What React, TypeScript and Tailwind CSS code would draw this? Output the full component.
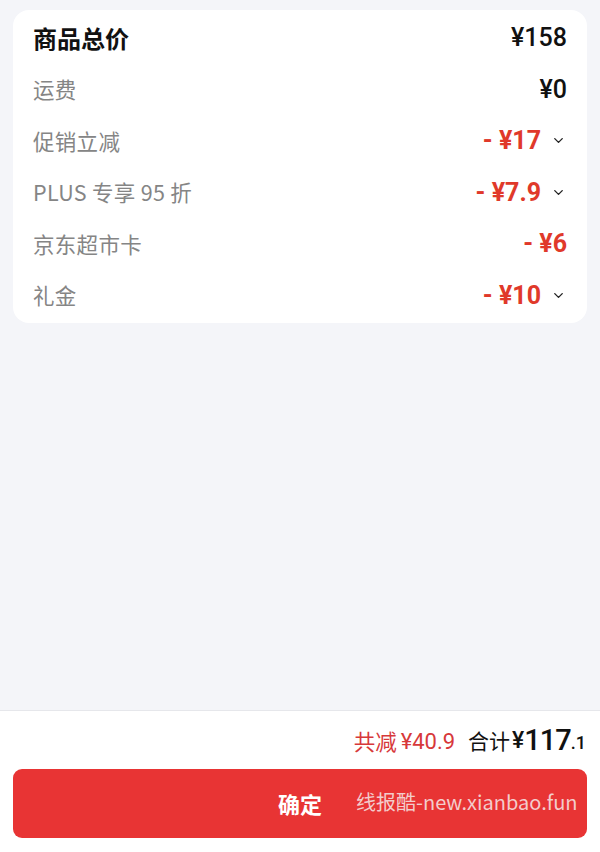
import { ChevronDown } from "lucide-react";

const cjk = { fontFamily: '"Noto Sans CJK SC", "Noto Sans", sans-serif' };
const num = { fontFamily: 'Roboto, "Noto Sans CJK SC", sans-serif' };

const rows = [
  { label: "运费", value: "¥0", red: false, more: false },
  { label: "促销立减", value: "- ¥17", red: true, more: true },
  { label: "PLUS 专享 95 折", value: "- ¥7.9", red: true, more: true },
  { label: "京东超市卡", value: "- ¥6", red: true, more: false },
  { label: "礼金", value: "- ¥10", red: true, more: true },
];

export default function App() {
  return (
    <div className="w-[600px] h-[852px] bg-[#f4f5f9] flex flex-col" style={cjk}>
      <div className="px-[13px] pt-[10px] flex-1">
        <div className="bg-white rounded-[16px] py-[2px] px-[20px]">
          <div className="h-[51.5px] flex items-center justify-between">
            <span className="text-[24px] font-bold text-[#111]">商品总价</span>
            <span className="text-[25px] font-medium text-[#111]" style={num}>
              ¥158
            </span>
          </div>
          {rows.map((r) => (
            <div key={r.label} className="h-[51.5px] flex items-center justify-between">
              <span className="text-[21.5px] text-[#858585] tracking-[0.3px]">{r.label}</span>
              <div className="flex items-center">
                <span
                  className={`text-[25px] ${r.red ? "font-bold text-[#e0392a]" : "font-medium text-[#111]"}`}
                  style={num}
                >
                  {r.value}
                </span>
                {r.more && (
                  <ChevronDown className="w-[15px] h-[15px] ml-[10px] mr-[1px] text-[#222]" strokeWidth={2.2} />
                )}
              </div>
            </div>
          ))}
        </div>
      </div>
      <div className="h-[142px] bg-white border-t border-[#e6e7eb] flex flex-col">
        <div className="h-[58px] flex items-center justify-end pr-[14px] pt-[2px]">
          <span className="text-[21.5px] text-[#d7383a]">共减</span>
          <span className="text-[22px] text-[#d7383a] ml-[4px]" style={num}>
            ¥40.9
          </span>
          <span className="text-[21px] text-[#111] ml-[13px]">合计</span>
          <span className="text-[23px] font-medium text-[#111] ml-[2px]" style={num}>
            ¥
          </span>
          <span className="text-[29px] font-medium text-[#111] tracking-[-1px]" style={num}>
            117
          </span>
          <span className="text-[18px] font-medium text-[#111] self-end mb-[13px]" style={num}>
            .1
          </span>
        </div>
        <div className="px-[13px]">
          <button className="relative w-full h-[69px] rounded-[9px] bg-[#e83434] flex items-center justify-center overflow-hidden">
            <span className="text-[22px] font-bold text-white">确定</span>
            <span className="absolute left-[343px] top-[23px] text-[20px] text-[#f3cccc] whitespace-nowrap leading-none">
              线报酷-new.xianbao.fun
            </span>
          </button>
        </div>
      </div>
    </div>
  );
}
